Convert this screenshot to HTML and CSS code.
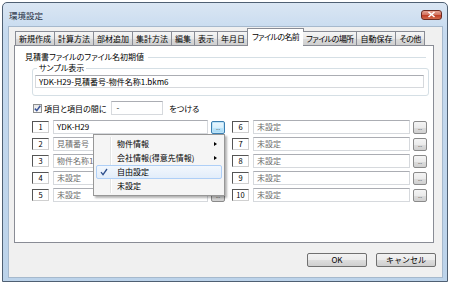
FILE: index.html
```html
<!DOCTYPE html>
<html lang="ja">
<head>
    <meta charset="UTF-8">
    <title>環境設定</title>
    <link rel="stylesheet" href="styles.css">
</head>
<body>
    <div class="window">
        <div class="titlebar">
            <span class="title">環境設定</span>
            <span class="close">
                <svg width="9" height="7" viewBox="0 0 9 7"><path d="M1.5 1 L7.5 6 M7.5 1 L1.5 6" stroke="#fff" stroke-width="1.6"/></svg>
            </span>
        </div>
        <div class="client">
            <div class="tabs">
                <div class="tab">新規作成</div>
                <div class="tab">計算方法</div>
                <div class="tab">部材追加</div>
                <div class="tab">集計方法</div>
                <div class="tab">編集</div>
                <div class="tab">表示</div>
                <div class="tab">年月日</div>
                <div class="tab kana active">ファイルの名前</div>
                <div class="tab kana">ファイルの場所</div>
                <div class="tab">自動保存</div>
                <div class="tab kana">その他</div>
            </div>
            <div class="panel">
                <div class="group-title"><span>見積書ファイルのファイル名初期値</span></div>
                <fieldset class="sample">
                    <legend>サンプル表示</legend>
                    <div class="textbox sample-box">YDK-H29-見積番号-物件名称1.bkm6</div>
                </fieldset>
                <div class="sep-row">
                    <span class="checkbox">
                        <svg width="7" height="7" viewBox="0 0 7 7"><path d="M0.8 3.6 L2.8 5.6 L6.3 0.8" fill="none" stroke="#3b5598" stroke-width="1.5"/></svg>
                    </span>
                    <span class="sep-label">項目と項目の間に</span>
                    <span class="textbox sep-input">-</span>
                    <span class="sep-after">をつける</span>
                </div>
                <div class="items">
                    <div class="item"><span class="num">1</span><span class="textbox value">YDK-H29</span><span class="dots focus">...</span></div>
                    <div class="item"><span class="num">2</span><span class="textbox">見積番号</span><span class="dots">...</span></div>
                    <div class="item"><span class="num">3</span><span class="textbox">物件名称1</span><span class="dots">...</span></div>
                    <div class="item"><span class="num">4</span><span class="textbox">未設定</span><span class="dots">...</span></div>
                    <div class="item"><span class="num">5</span><span class="textbox">未設定</span><span class="dots">...</span></div>
                    <div class="item"><span class="num">6</span><span class="textbox">未設定</span><span class="dots">...</span></div>
                    <div class="item"><span class="num">7</span><span class="textbox">未設定</span><span class="dots">...</span></div>
                    <div class="item"><span class="num">8</span><span class="textbox">未設定</span><span class="dots">...</span></div>
                    <div class="item"><span class="num">9</span><span class="textbox">未設定</span><span class="dots">...</span></div>
                    <div class="item"><span class="num">10</span><span class="textbox">未設定</span><span class="dots">...</span></div>
                </div>
                <div class="menu">
                    <div class="menu-item">物件情報<span class="arrow"></span></div>
                    <div class="menu-item">会社情報(得意先情報)<span class="arrow"></span></div>
                    <div class="menu-item selected">
                        <svg class="mark" width="8" height="8" viewBox="0 0 8 8"><path d="M1 4.2 L3 6.6 L7 1" fill="none" stroke="#2d4f8c" stroke-width="1.3"/></svg>
                        自由設定
                    </div>
                    <div class="menu-item">未設定</div>
                </div>
            </div>
            <div class="buttons">
                <button class="btn">OK</button>
                <button class="btn">キャンセル</button>
            </div>
        </div>
    </div>
</body>
</html>
```

FILE: styles.css
```css
body {
    margin: 0;
    background: #fff;
    font-family: "Noto Sans CJK JP", "Noto Sans", sans-serif;
    font-size: 8px;
    font-feature-settings: "palt";
    color: #000;
}
.window {
    margin: 2px 0 0 2px;
    width: 446px;
    height: 280px;
    box-sizing: border-box;
    border: 1px solid #4f6073;
    border-radius: 5px 5px 0 0;
    background: linear-gradient(#dae6f3, #c6daef 30px, #bcd3ea);
    padding: 0 4px 3px 5px;
    display: flex;
    flex-direction: column;
}
.titlebar {
    height: 23px;
    display: flex;
    align-items: center;
    justify-content: space-between;
    padding-left: 1px;
}
.title {
    font-size: 8.5px;
    color: #1e2d3d;
}
.close {
    width: 21px;
    height: 10px;
    margin-right: 1px;
    border: 1px solid #6b2b22;
    border-radius: 3px;
    box-sizing: border-box;
    background: linear-gradient(#e8a393, #d0705d 50%, #bf3b24 51%, #d26a4c);
    display: flex;
    align-items: center;
    justify-content: center;
}
.client {
    flex: 1;
    background: #f0f0f0;
    border: 1px solid #a6b9cd;
    display: flex;
    flex-direction: column;
}
.tabs {
    display: flex;
    align-items: flex-end;
    margin: 1px 0 0 6px;
    height: 17px;
    position: relative;
    z-index: 1;
}
.tab {
    height: 14px;
    line-height: 13px;
    padding: 0 3px;
    box-sizing: border-box;
    border: 1px solid #898c95;
    border-bottom: none;
    border-left: none;
    background: linear-gradient(#f6f6f6, #e9e9e9 50%, #dcdcdc 51%, #cfcfcf);
    white-space: nowrap;
}
.tab.kana {
    letter-spacing: -0.6px;
}
.tab:first-child {
    border-left: 1px solid #898c95;
}
.tab.active {
    height: 18px;
    line-height: 15px;
    padding: 0 4px;
    margin: 0 -1px -1px -2px;
    border-left: 1px solid #898c95;
    background: #fff;
}
.tab.active + .tab {
    border-left: none;
}
.panel {
    position: relative;
    margin-left: 5px;
    width: 420px;
    height: 198px;
    box-sizing: border-box;
    background: #fff;
    border: 1px solid #898c95;
    padding: 6px 5px 0 17px;
}
.group-title {
    display: flex;
    align-items: center;
    height: 10px;
    line-height: 10px;
    margin-left: -7px;
}
.group-title::after {
    content: "";
    flex: 1;
    border-top: 1px solid #d5dfe5;
    margin: 1px 2px 0 4px;
}
.sample {
    margin: 1px 0 0 0;
    padding: 2px 4px 7px 2px;
    border: 1px solid #d5dfe5;
    border-radius: 3px;
    width: 397px;
    box-sizing: border-box;
}
.sample legend {
    padding: 0 2px;
    margin-left: 2px;
    line-height: 10px;
}
.textbox {
    display: block;
    box-sizing: border-box;
    background: #fff;
    border: 1px solid #d6d9dd;
    border-top-color: #abadb3;
    height: 14px;
    line-height: 12px;
    padding-left: 3px;
    white-space: nowrap;
    overflow: hidden;
    color: #6d6d6d;
}
.sample-box {
    height: 13px;
    line-height: 11px;
    color: #000;
}
.sep-row {
    display: flex;
    align-items: center;
    height: 14px;
    margin-top: 5px;
    padding-left: 1px;
}
.checkbox {
    width: 9px;
    height: 9px;
    box-sizing: border-box;
    border: 1px solid #8e8f8f;
    background: linear-gradient(#e6e6e6, #fbfbfb);
    display: flex;
    align-items: center;
    justify-content: center;
}
.sep-label {
    margin-left: 2px;
}
.sep-input {
    width: 52px;
    margin-left: 5px;
    color: #000;
    padding-left: 4px;
}
.sep-after {
    margin-left: 6px;
}
.items {
    display: grid;
    grid-template-rows: repeat(5, 14px);
    grid-auto-flow: column;
    grid-template-columns: 193px 195px;
    column-gap: 7px;
    row-gap: 3px;
    margin-top: 5px;
}
.item {
    display: grid;
    grid-template-columns: 17px 1fr 14px;
    align-items: center;
}
.num {
    height: 12px;
    box-sizing: border-box;
    background: #fff;
    border: 1px solid #d0d0d0;
    border-top-color: #555;
    border-left-color: #555;
    text-align: center;
    line-height: 10px;
    font-size: 7.5px;
}
.item .textbox {
    margin: 0 3px 0 4px;
}
.item .value {
    color: #000;
}
.dots {
    height: 13px;
    box-sizing: border-box;
    border: 1px solid #8a8a8a;
    border-radius: 2px;
    background: linear-gradient(#f4f4f4, #ebebeb 50%, #dddddd 51%, #d0d0d0);
    text-align: center;
    line-height: 12px;
    font-size: 5px;
    color: #444;
}
.dots.focus {
    border-color: #3c7fb1;
    box-shadow: inset 0 0 0 1px #bde4f8;
    background: linear-gradient(#eaf6fd, #d9f0fc 50%, #bee6fd 51%, #a7d9f5);
}
.menu {
    position: absolute;
    left: 78px;
    top: 88px;
    width: 132px;
    box-sizing: border-box;
    padding: 2px;
    background: #f5f5f5;
    border: 1px solid #979797;
    box-shadow: 2px 2px 2px rgba(0, 0, 0, 0.3);
}
.menu::before {
    content: "";
    position: absolute;
    left: 16px;
    top: 2px;
    bottom: 2px;
    border-left: 1px solid #e2e3e3;
    border-right: 1px solid #fff;
}
.menu-item {
    position: relative;
    height: 14px;
    line-height: 14px;
    padding-left: 21px;
    box-sizing: border-box;
}
.menu-item.selected {
    background: linear-gradient(#f2f7fd, #e2edfa);
    border: 1px solid #aecff7;
    border-radius: 2px;
    line-height: 12px;
    padding-left: 20px;
}
.mark {
    position: absolute;
    left: 3px;
    top: 2px;
}
.arrow {
    position: absolute;
    right: 5px;
    top: 5px;
    border-left: 3px solid #000;
    border-top: 2.5px solid transparent;
    border-bottom: 2.5px solid transparent;
}
.buttons {
    display: flex;
    justify-content: flex-end;
    gap: 9px;
    margin: 10px 6px 0 0;
}
.btn {
    width: 60px;
    height: 14px;
    padding: 0;
    font-family: inherit;
    font-size: 8px;
    line-height: 12px;
    border: 1px solid #707070;
    border-radius: 2px;
    background: linear-gradient(#f2f2f2, #ebebeb 50%, #dddddd 51%, #cfcfcf);
    color: #000;
}
```
